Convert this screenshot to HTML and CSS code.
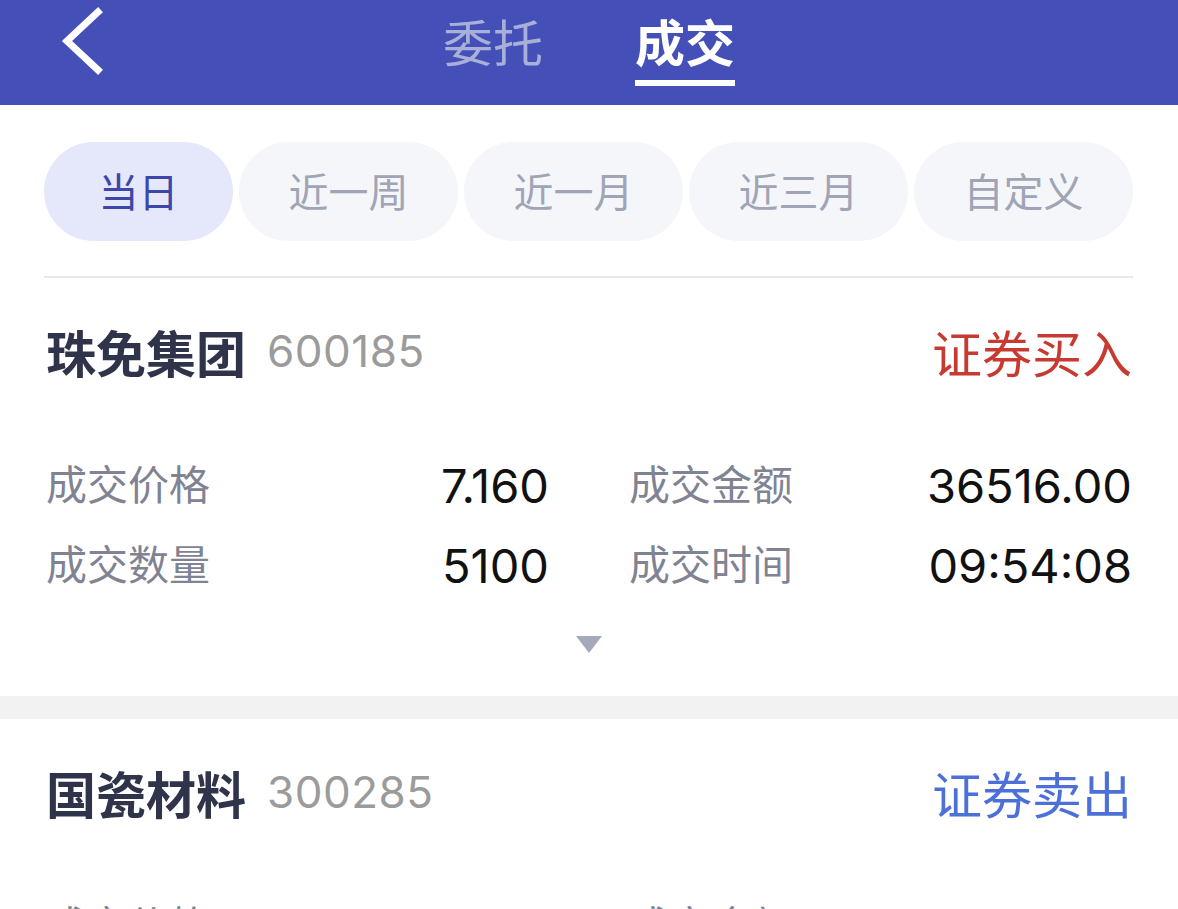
FILE: index.html
```html
<!DOCTYPE html>
<html lang="zh-CN">
<head>
    <meta charset="UTF-8">
    <meta name="viewport" content="width=device-width, initial-scale=1.0">
    <title>成交查询</title>
    <link rel="stylesheet" href="styles.css">
</head>
<body>
    <div class="header">
        <div class="back">
            <svg width="50" height="80" viewBox="0 0 50 80">
                <polyline points="38,12 7,41 38,70" fill="none" stroke="#fff" stroke-width="7" stroke-linecap="square"/>
            </svg>
        </div>
        <div class="tabs">
            <div class="tab">委托</div>
            <div class="tab active">成交</div>
        </div>
        <div></div>
    </div>

    <div class="filters">
        <div class="pill active">当日</div>
        <div class="pill">近一周</div>
        <div class="pill">近一月</div>
        <div class="pill">近三月</div>
        <div class="pill">自定义</div>
    </div>

    <div class="card">
        <div class="title-row">
            <div class="stock">
                <span class="name">珠免集团</span>
                <span class="code">600185</span>
            </div>
            <div class="type buy">证券买入</div>
        </div>
        <div class="details">
            <div class="item"><span class="label">成交价格</span><span class="value">7.160</span></div>
            <div class="item"><span class="label">成交金额</span><span class="value">36516.00</span></div>
            <div class="item"><span class="label">成交数量</span><span class="value">5100</span></div>
            <div class="item"><span class="label">成交时间</span><span class="value">09:54:08</span></div>
        </div>
        <div class="more"><span class="arrow"></span></div>
    </div>

    <div class="spacer"></div>

    <div class="card">
        <div class="title-row">
            <div class="stock">
                <span class="name">国瓷材料</span>
                <span class="code">300285</span>
            </div>
            <div class="type sell">证券卖出</div>
        </div>
        <div class="details">
            <div class="item"><span class="label">成交价格</span><span class="value">28.350</span></div>
            <div class="item"><span class="label">成交金额</span><span class="value">56700.00</span></div>
        </div>
    </div>
</body>
</html>
```

FILE: styles.css
```css
body
{
    margin: 0;
    font-family: "Noto Sans CJK SC", "Noto Sans", sans-serif;
    background-color: #fff;
    overflow: hidden;
}
.header
{
    height: 105px;
    background-color: #444fb8;
    display: grid;
    grid-template-columns: 1fr auto 1fr;
    align-items: start;
}
.back
{
    padding: 0 0 0 60px;
    height: 80px;
}
.back svg
{
    display: block;
}
.tabs
{
    display: flex;
    gap: 92px;
}
.tab
{
    font-size: 50px;
    line-height: 50px;
    padding-top: 15px;
    height: 86px;
    box-sizing: border-box;
    color: #a8afd9;
}
.tab.active
{
    color: #fff;
    font-weight: 600;
    border-bottom: 6px solid #fff;
}
.filters
{
    display: flex;
    gap: 6px;
    margin: 0 45px 0 44px;
    padding: 37px 0 35px;
    border-bottom: 2px solid #e8e8ea;
}
.pill
{
    width: 219px;
    height: 99px;
    padding-bottom: 4px;
    box-sizing: border-box;
    border-radius: 50px;
    background-color: #f5f6fa;
    color: #a0a5b6;
    font-size: 40px;
    display: flex;
    justify-content: center;
    align-items: center;
}
.pill.active
{
    width: 189px;
    background-color: #e5e8fb;
    color: #3c47a9;
}
.card
{
    padding: 42px 46px 0 46px;
}
.title-row
{
    display: flex;
    justify-content: space-between;
    align-items: center;
    height: 62px;
}
.stock
{
    display: flex;
    align-items: center;
    gap: 21px;
}
.name
{
    font-size: 50px;
    font-weight: bold;
    color: #30344a;
}
.code
{
    font-family: Inter, "Noto Sans", sans-serif;
    font-size: 44px;
    color: #9b9b9b;
    letter-spacing: 0.5px;
}
.type
{
    font-size: 50px;
}
.buy
{
    color: #c63a31;
}
.sell
{
    color: #4c70d8;
}
.details
{
    display: grid;
    grid-template-columns: 1fr 1fr;
    column-gap: 80px;
    margin-top: 60px;
}
.item
{
    display: flex;
    justify-content: space-between;
    align-items: center;
    height: 80px;
}
.label
{
    font-size: 41px;
    color: #7f8393;
}
.value
{
    font-family: Inter, "Noto Sans", sans-serif;
    font-size: 47px;
    color: #111;
    padding-top: 7px;
}
.more
{
    display: flex;
    justify-content: center;
    padding: 34px 0 43px;
}
.arrow
{
    width: 0;
    height: 0;
    border-left: 13px solid transparent;
    border-right: 13px solid transparent;
    border-top: 17px solid #a4a9bb;
}
.spacer
{
    height: 23px;
    background-color: #f2f2f2;
}
```
